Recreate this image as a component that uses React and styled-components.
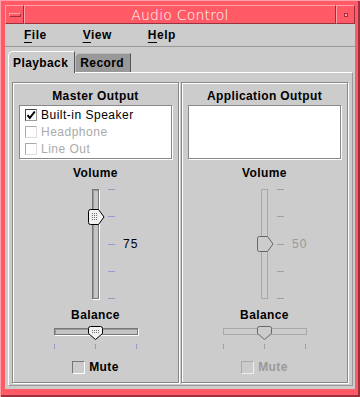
import React, { useId } from 'react';
import styled, { createGlobalStyle } from 'styled-components';

const RED = '#ff5a66';
const RED_LIGHT = '#ffa2aa';
const RED_DARK = '#9e2f3e';
const GREY = '#cccccc';
const EDGE = '#888888';
const TICK = '#9999cc';

const GlobalStyle = createGlobalStyle`
  html, body {
    margin: 0;
    padding: 0;
    background: #fff;
  }
  body {
    font-family: "Liberation Sans", Arial, sans-serif;
    color: #000;
  }
`;

const Frame = styled.div`
  width: 360px;
  height: 397px;
  box-sizing: border-box;
  padding: 5px 5px 8px 5px;
  background: ${RED};
  box-shadow: inset 1px 1px 0 ${RED_LIGHT}, inset -2px -2px 0 ${RED_DARK};
  display: flex;
  flex-direction: column;
`;

const TitleBar = styled.div`
  height: 19px;
  flex-shrink: 0;
  display: flex;
`;

const TitleCell = styled.div`
  box-sizing: border-box;
  height: 19px;
  width: ${(p) => (p.$grow ? 'auto' : '19px')};
  flex: ${(p) => (p.$grow ? 1 : 'none')};
  border: 1px solid;
  border-color: ${RED_LIGHT} ${RED_DARK} ${RED_DARK} ${RED_LIGHT};
  display: flex;
  align-items: center;
  justify-content: center;
  color: #fff;
  font-family: "DejaVu Sans", sans-serif;
  font-weight: 200;
  font-size: 14px;
  letter-spacing: 0.2px;
`;

const MenuGlyph = styled.span`
  width: 10px;
  height: 2px;
  border-top: 1px solid ${RED_LIGHT};
  border-left: 1px solid ${RED_LIGHT};
  border-bottom: 1px solid ${RED_DARK};
  border-right: 1px solid ${RED_DARK};
`;

const MinGlyph = styled.span`
  width: 2px;
  height: 2px;
  background: ${RED_LIGHT};
  border: 1px solid ${RED_DARK};
`;

const Body = styled.div`
  flex: 1;
  background: ${GREY};
  display: flex;
  flex-direction: column;
  min-height: 0;
`;

const MenuBar = styled.div`
  height: 22px;
  flex-shrink: 0;
  display: flex;
  align-items: center;
  padding-left: 1px;
  border-bottom: 1px solid #999;
`;

const MenuItem = styled.span`
  padding: 0 18px;
  font-weight: bold;
  font-size: 12px;
  letter-spacing: 0.5px;

  u {
    text-decoration: underline;
    text-underline-offset: 3px;
    text-decoration-thickness: 1px;
  }
`;

const TabRow = styled.div`
  display: flex;
  align-items: flex-end;
  padding: 4px 0 0 3px;
  flex-shrink: 0;
`;

const Tab = styled.div`
  position: relative;
  box-sizing: border-box;
  height: ${(p) => (p.$active ? '22px' : '19px')};
  margin-bottom: ${(p) => (p.$active ? '-1px' : '0')};
  z-index: ${(p) => (p.$active ? 1 : 0)};
  padding: 0 6px 0 4px;
  background: ${(p) => (p.$active ? GREY : '#999999')};
  border-top: 1px solid ${(p) => (p.$active ? '#fff' : '#bbbbbb')};
  border-left: 1px solid ${(p) => (p.$active ? '#fff' : '#bbbbbb')};
  border-right: 1px solid #555;
  border-top-left-radius: 5px;
  display: flex;
  align-items: center;
  font-weight: bold;
  font-size: 12px;
  letter-spacing: 0.4px;
`;

const Panel = styled.div`
  flex: 1;
  min-height: 0;
  margin: 0 2px 3px 3px;
  border-top: 1px solid #fff;
  border-left: 1px solid #fff;
  border-right: 1px solid #999;
  border-bottom: 1px solid #999;
  padding: 9px 4px 2px 3px;
  display: grid;
  grid-template-columns: 1fr 1fr;
  gap: 2px;
`;

const Group = styled.div`
  border: 1px solid ${EDGE};
  box-shadow: inset 1px 1px 0 #fff, 1px 1px 0 #fff;
  display: flex;
  flex-direction: column;
  align-items: center;
  min-width: 0;
`;

const Label = styled.div`
  height: 14px;
  line-height: 14px;
  margin-top: ${(p) => p.$top || 0}px;
  font-weight: bold;
  font-size: 12px;
  letter-spacing: 0.4px;
  color: ${(p) => (p.$disabled ? '#999' : '#000')};
`;

const ListBox = styled.div`
  align-self: stretch;
  margin: 2px 6px 0 6px;
  height: 54px;
  box-sizing: border-box;
  background: #fff;
  border: 1px solid ${EDGE};
  box-shadow: 1px 1px 0 #fff;
`;

const ListRow = styled.div`
  height: 17px;
  display: flex;
  align-items: center;
  gap: 4px;
  padding-left: 5px;
  font-size: 12px;
  letter-spacing: 0.5px;
  color: ${(p) => (p.$disabled ? '#aaaaaa' : '#000')};
`;

const Check = styled.span`
  width: 12px;
  height: 12px;
  box-sizing: border-box;
  flex: none;
  display: flex;
  align-items: center;
  justify-content: center;
  background: ${(p) => (p.$fill ? p.$fill : '#fff')};
  border: 1px solid;
  border-color: ${(p) => (p.$disabled ? '#aaa #ddd #ddd #aaa' : '#444 #999 #999 #444')};
`;

const MuteRow = styled.div`
  margin-top: 8px;
  height: 14px;
  display: flex;
  align-items: center;
  gap: 4px;
  font-weight: bold;
  font-size: 12px;
  letter-spacing: 0.4px;
  color: ${(p) => (p.$disabled ? '#999' : '#000')};
`;

const MuteBox = styled.span`
  width: 13px;
  height: 13px;
  box-sizing: border-box;
  background: ${GREY};
  border: 1px solid;
  border-color: ${(p) => (p.$disabled ? '#aaa #eee #eee #aaa' : '#777 #fff #fff #777')};
`;

const VSliderArea = styled.div`
  height: 128px;
  display: flex;
  justify-content: center;
  align-items: flex-start;
`;

const VTrack = styled.div`
  position: relative;
  margin-top: 9px;
  width: 7px;
  height: 110px;
  box-sizing: border-box;
  background: ${(p) => (p.$disabled ? GREY : '#c4c4c4')};
  border: 1px solid ${(p) => (p.$disabled ? '#a8a8a8' : '#777')};
  box-shadow: ${(p) => (p.$disabled ? 'none' : 'inset 1px 1px 0 #999, 1px 1px 0 #fff')};
`;

const VTick = styled.span`
  position: absolute;
  left: 15px;
  width: 7px;
  height: 1px;
  background: ${(p) => (p.$disabled ? '#a0a0a0' : TICK)};
`;

const VValue = styled.span`
  position: absolute;
  left: 30px;
  top: 47px;
  font-size: 12px;
  letter-spacing: 1px;
  line-height: 14px;
  color: ${(p) => (p.$disabled ? '#999' : '#000')};
`;

const Thumb = styled.svg`
  position: absolute;
  display: block;
`;

const HSliderArea = styled.div`
  height: 30px;
  display: flex;
  justify-content: center;
  align-items: flex-start;
`;

const HTrack = styled.div`
  position: relative;
  margin-top: 6px;
  width: 84px;
  height: 7px;
  box-sizing: border-box;
  background: ${(p) => (p.$disabled ? GREY : '#c4c4c4')};
  border: 1px solid ${(p) => (p.$disabled ? '#a8a8a8' : '#777')};
  box-shadow: ${(p) => (p.$disabled ? 'none' : 'inset 1px 1px 0 #999, 1px 1px 0 #fff')};
`;

const HTick = styled.span`
  position: absolute;
  top: 15px;
  width: 1px;
  height: 5px;
  background: ${(p) => (p.$disabled ? '#a0a0a0' : TICK)};
`;

const CheckMark = () => (
  <svg width="10" height="10" viewBox="0 0 10 10">
    <path d="M1.5 5.2 L3.8 8 L8.8 1.5" fill="none" stroke="#000" strokeWidth="2" />
  </svg>
);

const Dots = ({ id }) => (
  <pattern id={id} width="2" height="2" patternUnits="userSpaceOnUse">
    <rect width="2" height="2" fill="#eeeeee" />
    <rect x="0" y="0" width="1" height="1" fill="#777" />
  </pattern>
);

const VThumb = ({ value, disabled }) => {
  const id = useId().replace(/:/g, '');
  const top = (1 - value / 100) * 108 - 8;
  return (
    <Thumb width="17" height="16" viewBox="0 0 17 16" style={{ top, left: -5 }}>
      <defs>{!disabled && <Dots id={id} />}</defs>
      <path
        d="M2.5 0.5 H10.5 L16 8 L10.5 15.5 H2.5 Q0.5 15.5 0.5 13.5 V2.5 Q0.5 0.5 2.5 0.5 Z"
        fill={disabled ? GREY : '#f2f2f2'}
        stroke={disabled ? '#666' : '#000'}
      />
      {!disabled && <rect x="3" y="4" width="7" height="8" fill={`url(#${id})`} />}
    </Thumb>
  );
};

const HThumb = ({ value, disabled }) => {
  const id = useId().replace(/:/g, '');
  const left = (value / 100) * 82 - 8;
  return (
    <Thumb width="15" height="14" viewBox="0 0 15 14" style={{ left, top: -3 }}>
      <defs>{!disabled && <Dots id={id} />}</defs>
      <path
        d="M2.5 0.5 H12.5 Q14.5 0.5 14.5 2.5 V7.5 L7.5 13.5 L0.5 7.5 V2.5 Q0.5 0.5 2.5 0.5 Z"
        fill={disabled ? GREY : '#f2f2f2'}
        stroke={disabled ? '#666' : '#000'}
      />
      {!disabled && <rect x="4" y="3" width="7" height="5" fill={`url(#${id})`} />}
    </Thumb>
  );
};

const VolumeSlider = ({ value, disabled }) => (
  <VSliderArea>
    <VTrack $disabled={disabled}>
      {[0, 1, 2, 3, 4].map((i) => (
        <VTick key={i} $disabled={disabled} style={{ top: Math.round(i * 27.25) - 1 }} />
      ))}
      <VValue $disabled={disabled}>{value}</VValue>
      <VThumb value={value} disabled={disabled} />
    </VTrack>
  </VSliderArea>
);

const BalanceSlider = ({ value, disabled }) => (
  <HSliderArea>
    <HTrack $disabled={disabled}>
      {[0, 41, 82].map((x) => (
        <HTick key={x} $disabled={disabled} style={{ left: x - 1 }} />
      ))}
      <HThumb value={value} disabled={disabled} />
    </HTrack>
  </HSliderArea>
);

const outputs = [
  { name: 'Built-in Speaker', checked: true },
  { name: 'Headphone', disabled: true },
  { name: 'Line Out', disabled: true },
];

const OutputGroup = ({ title, items, volume, disabled }) => (
  <Group>
    <Label $top={6}>{title}</Label>
    <ListBox>
      {items.map((item) => (
        <ListRow key={item.name} $disabled={item.disabled}>
          <Check $disabled={item.disabled}>{item.checked && <CheckMark />}</Check>
          {item.name}
        </ListRow>
      ))}
    </ListBox>
    <Label $top={7}>Volume</Label>
    <VolumeSlider value={volume} disabled={disabled} />
    <Label>Balance</Label>
    <BalanceSlider value={50} disabled={disabled} />
    <MuteRow $disabled={disabled}>
      <MuteBox $disabled={disabled} />
      Mute
    </MuteRow>
  </Group>
);

export default function App() {
  return (
    <>
      <GlobalStyle />
      <Frame>
        <TitleBar>
          <TitleCell>
            <MenuGlyph />
          </TitleCell>
          <TitleCell $grow>Audio Control</TitleCell>
          <TitleCell>
            <MinGlyph />
          </TitleCell>
        </TitleBar>
        <Body>
          <MenuBar>
            <MenuItem>
              <u>F</u>ile
            </MenuItem>
            <MenuItem>
              <u>V</u>iew
            </MenuItem>
            <MenuItem>
              <u>H</u>elp
            </MenuItem>
          </MenuBar>
          <TabRow>
            <Tab $active>Playback</Tab>
            <Tab>Record</Tab>
          </TabRow>
          <Panel>
            <OutputGroup title="Master Output" items={outputs} volume={75} />
            <OutputGroup title="Application Output" items={[]} volume={50} disabled />
          </Panel>
        </Body>
      </Frame>
    </>
  );
}
